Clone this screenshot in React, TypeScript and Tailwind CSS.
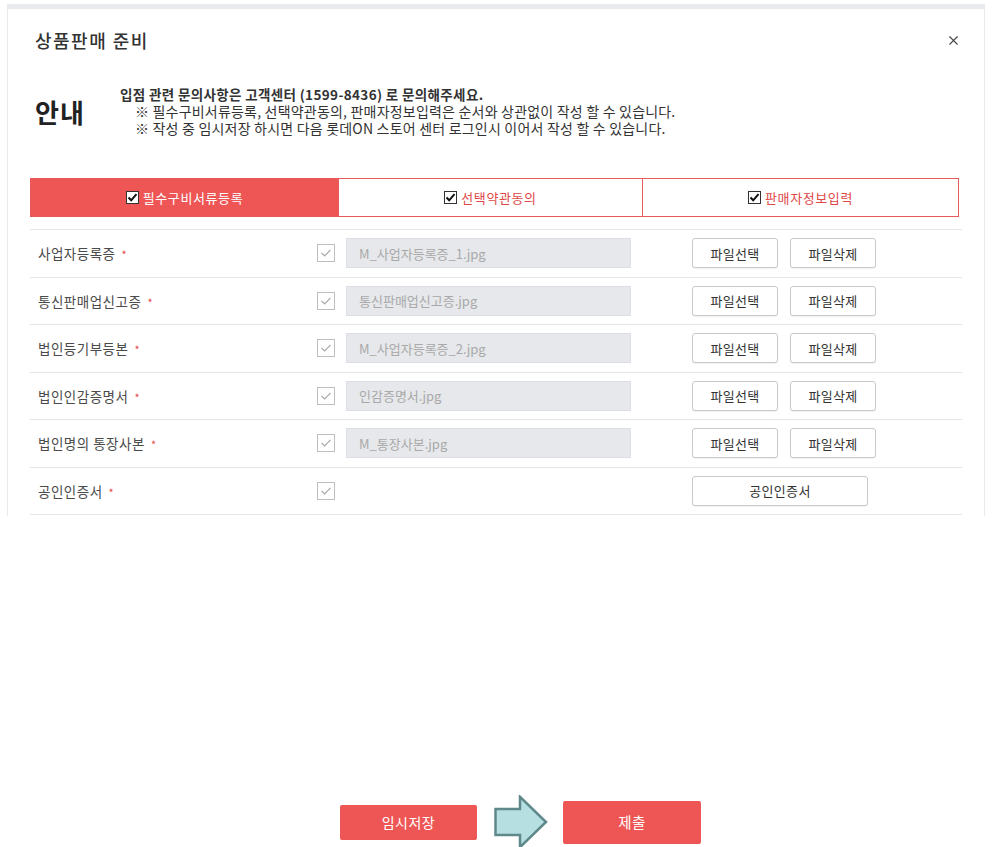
import { X } from 'lucide-react';

// 필수 구비서류 목록
const docs = [
  { label: '사업자등록증', file: 'M_사업자등록증_1.jpg' },
  { label: '통신판매업신고증', file: '통신판매업신고증.jpg' },
  { label: '법인등기부등본', file: 'M_사업자등록증_2.jpg' },
  { label: '법인인감증명서', file: '인감증명서.jpg' },
  { label: '법인명의 통장사본', file: 'M_통장사본.jpg' },
];

const tabs = [
  { label: '필수구비서류등록', w: 'w-[307px]' },
  { label: '선택약관동의', w: 'w-[304px]' },
  { label: '판매자정보입력', w: 'flex-1' },
];

// 탭 안의 체크된 박스
function TabCheck() {
  return (
    <svg width="13" height="13" viewBox="0 0 13 13" className="shrink-0">
      <rect x="0.5" y="0.5" width="12" height="12" fill="#fff" stroke="#333" />
      <path d="M2.5 6.5 L5.2 9.3 L10.5 3.2" fill="none" stroke="#111" strokeWidth="2" />
    </svg>
  );
}

// 행 체크박스 (비활성 상태)
function RowCheck() {
  return (
    <svg width="18" height="18" viewBox="0 0 18 18" className="shrink-0">
      <rect x="0.5" y="0.5" width="17" height="17" fill="#fff" stroke="#bdbdbd" />
      <path d="M4.5 9 L7.7 12 L13.5 5.8" fill="none" stroke="#a8a8a8" strokeWidth="1.2" />
    </svg>
  );
}

function FileButton({ children, wide }: { children: React.ReactNode; wide?: boolean }) {
  return (
    <button
      className={`h-[30px] ${wide ? 'w-[176px]' : 'w-[86px]'} rounded-[3px] border border-[#c9c9c9] bg-white text-[13px] tracking-[0.3px] text-[#333] shadow-[0_1px_1px_rgba(0,0,0,0.06)]`}
    >
      {children}
    </button>
  );
}

function DocRow({ label, file, cert }: { label: string; file?: string; cert?: boolean }) {
  return (
    <div className="flex h-[47.5px] items-center border-b border-[#e6e6e6]">
      <div className="w-[287px] pl-[8px] text-[13.5px] tracking-[0.5px] text-[#4a4a4a]">
        {label}
        <span className="ml-[6px] text-[11px] text-[#e84848]">*</span>
      </div>
      <RowCheck />
      <div className="ml-[11px] w-[285px]">
        {file && (
          <div className="flex h-[30px] items-center border border-[#dcdfe3] bg-[#e6e8eb] px-[12px] text-[13px] text-[#a9a9a9]">
            {file}
          </div>
        )}
      </div>
      <div className="ml-[61px] flex gap-[12px]">
        {cert ? (
          <FileButton wide>공인인증서</FileButton>
        ) : (
          <>
            <FileButton>파일선택</FileButton>
            <FileButton>파일삭제</FileButton>
          </>
        )}
      </div>
    </div>
  );
}

export default function App() {
  return (
    <div
      className="min-h-[847px] bg-white pt-[4px] px-[7px]"
      style={{ fontFamily: '"Noto Sans CJK KR", "Noto Sans", sans-serif' }}
    >
      {/* 모달 */}
      <div className="h-[512px] overflow-hidden border-x-[1.5px] border-t-[5px] border-[#e8eaed] bg-white px-[22px]">
        <div className="flex items-center justify-between pt-[19px] pl-[5px] pr-[1px]">
          <h1 className="text-[18px] font-medium leading-[24px] tracking-[1.5px] text-[#333]">상품판매 준비</h1>
          <X size={15} strokeWidth={1.7} className="text-[#444]" />
        </div>

        <div className="mt-[34px] flex items-center pl-[5px]">
          <div className="w-[85px] text-[26px] font-bold tracking-[1px] text-[#222]">안내</div>
          <div className="text-[#333] leading-[17px]">
            <p className="text-[13.5px] font-bold tracking-[0.35px]">입점 관련 문의사항은 고객센터 (1599-8436) 로 문의해주세요.</p>
            <p className="pl-[15px] text-[14px] tracking-[0.2px]">※ 필수구비서류등록, 선택약관동의, 판매자정보입력은 순서와 상관없이 작성 할 수 있습니다.</p>
            <p className="pl-[15px] text-[14px] tracking-[0.2px]">※ 작성 중 임시저장 하시면 다음 롯데ON 스토어 센터 로그인시 이어서 작성 할 수 있습니다.</p>
          </div>
        </div>

        {/* 단계 탭 */}
        <div className="mt-[41px] flex h-[39px] w-[929px] border border-[#e85a5a]">
          {tabs.map((t, i) => (
            <div
              key={t.label}
              className={`${t.w} flex items-center justify-center gap-[4px] text-[13px] tracking-[0.6px] ${
                i === 0 ? 'bg-[#ee5656] text-white' : 'border-l border-[#e85a5a] text-[#e04848]'
              }`}
            >
              <TabCheck />
              {t.label}
            </div>
          ))}
        </div>

        <div className="mt-[12px] border-t border-[#e6e6e6]">
          {docs.map((d) => (
            <DocRow key={d.label} label={d.label} file={d.file} />
          ))}
          <DocRow label="공인인증서" cert />
        </div>
      </div>

      {/* 하단 버튼 */}
      <div className="mt-[279px] flex items-center pl-[333px]">
        <button className="h-[35px] w-[137px] rounded-[2px] bg-[#ee5555] text-[14px] tracking-[0.5px] text-white">임시저장</button>
        <svg width="54" height="54" viewBox="0 0 54 54" className="ml-[17px]">
          <path
            d="M1.5 14 H26 V1.8 L52 27 L26 52.2 V40 H1.5 Z"
            fill="#b6dfe2"
            stroke="#5f888a"
            strokeWidth="2.5"
            strokeLinejoin="miter"
          />
        </svg>
        <button className="ml-[15px] h-[43px] w-[138px] rounded-[2px] bg-[#ee5555] text-[14.5px] tracking-[0.5px] text-white">제출</button>
      </div>
    </div>
  );
}
